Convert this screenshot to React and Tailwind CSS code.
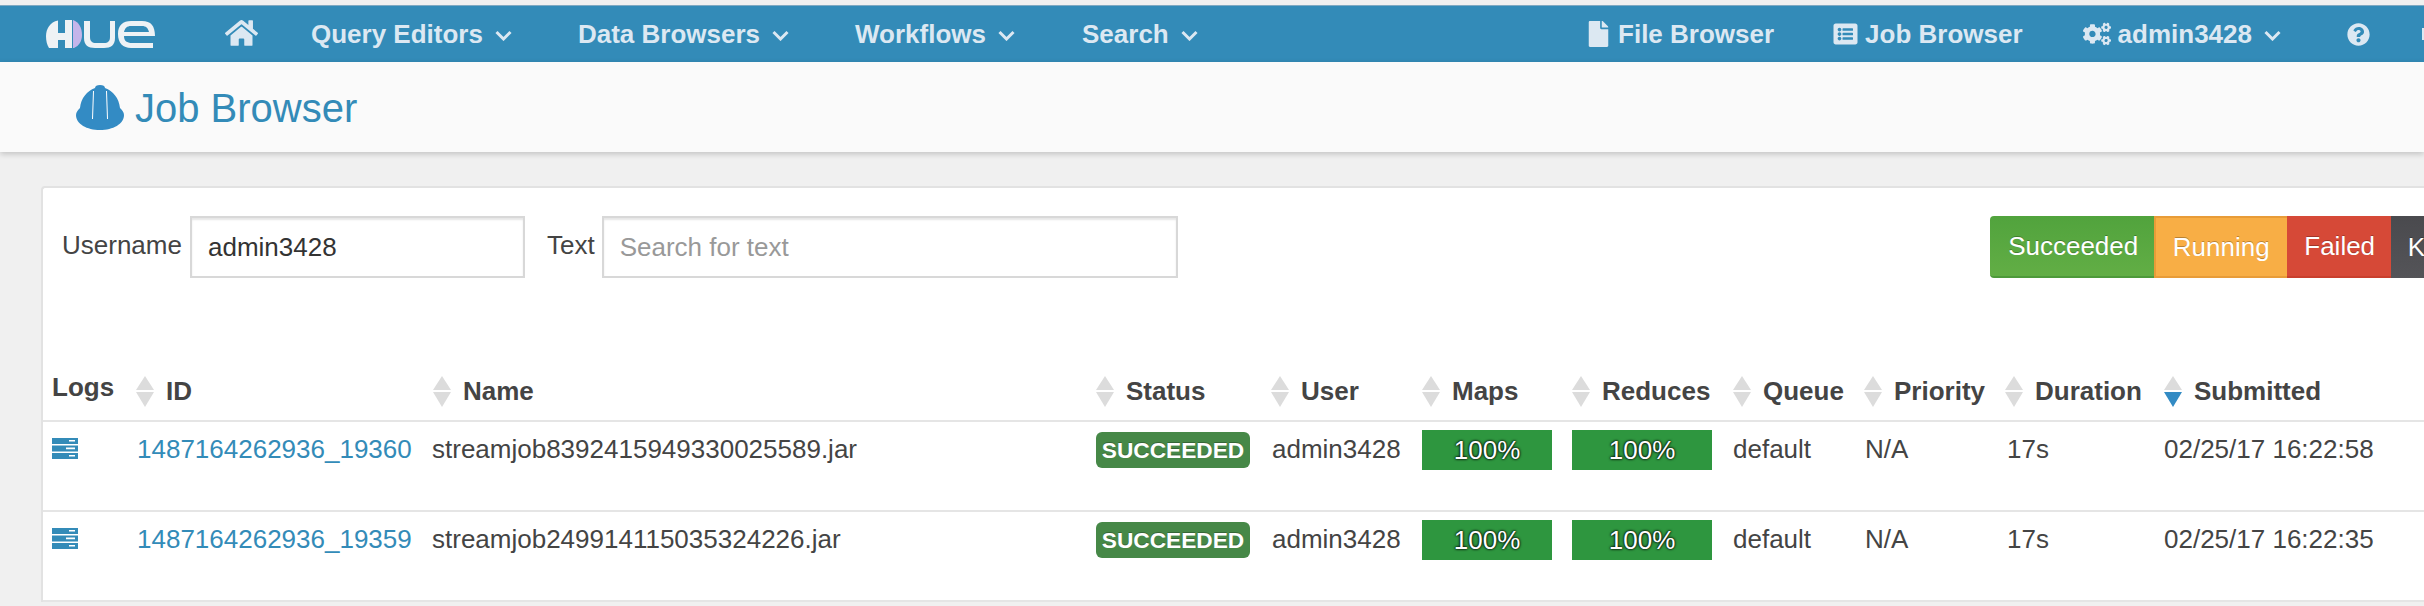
import React from 'react';
import { FaHome, FaFile, FaListAlt, FaCogs, FaQuestionCircle } from 'react-icons/fa';

const gridCols = 'grid grid-cols-[84px_297px_663px_175px_151px_150px_161px_131px_141px_159px_260px] pl-[9px]';

const jobs = [
  { id: '1487164262936_19360', name: 'streamjob8392415949330025589.jar', submitted: '02/25/17 16:22:58' },
  { id: '1487164262936_19359', name: 'streamjob249914115035324226.jar', submitted: '02/25/17 16:22:35' },
];

const Chevron = ({ className }) => (
  <svg viewBox="0 0 17 11" className={className} fill="none" stroke="currentColor" strokeWidth="3">
    <path d="M1.5 2 L8.5 9 L15.5 2" />
  </svg>
);

const HueLogo = () => (
  <svg viewBox="0 0 110 28" className="h-[28px] w-[110px]">
    <path fill="#eef2f5" d="M12 .5C4 2 0 9 0 16c0 5 1 9 3 12h9v-8h7v8h7V0h-7v13h-7z" />
    <path fill="#c5b5ea" d="M27 0c6 2 9 8 9 15 0 6-3 11-8 13h-1z" />
    <path fill="#eef2f5" d="M38 1h6v16c0 4 2 6 6 6h8c4 0 6-2 6-6V1h5v17c0 7-4 10-11 10h-9c-7 0-11-3-11-10z" />
    <path fill="#eef2f5" fillRule="evenodd" d="M72 14c0-9 5-13 13-13h11c9 0 13 5 13 15H78c0 5 3 7 8 7h21v5H85c-8 0-13-5-13-14zm6-2h25c-1-4-3-6-7-6H85c-4 0-6 2-7 6z" />
  </svg>
);

const Helmet = () => (
  <svg viewBox="0 0 48 45" className="h-[45px] w-[48px] shrink-0">
    <path fill="#338bc4" d="M19 3c0-2 2-3 5-3s5 1 5 3c8 3 14 10 15 20 2 2 4 4 4 7 0 9-11 15-24 15S0 39 0 30c0-3 2-5 4-7C5 13 11 6 19 3z" />
    <path fill="none" stroke="#fff" strokeWidth="1" d="M17.5 6 L16.5 34 M30.5 6 L31.5 34" />
  </svg>
);

const TasksIcon = () => (
  <svg viewBox="0 0 26 21" className="mt-[-4px] h-[21px] w-[26px]">
    <path fill="#338bb8" d="M0 0h26v6H0zM0 7.5h26v6H0zM0 15h26v6H0z" />
    <path fill="#fff" d="M17 2h6v1.6h-6zM14 9.6h9v1.6h-9zM17 17h6v1.6h-6z" />
  </svg>
);

const SortIcon = ({ active }) => (
  <svg viewBox="0 0 18 31" className="h-[31px] w-[18px] shrink-0">
    <path fill="#dcdcdc" d="M9 0 L18 14 H0 Z" />
    <path fill={active ? '#338bc4' : '#dcdcdc'} d="M0 16 H18 L9 31 Z" />
  </svg>
);

const NavMenu = ({ label, className }) => (
  <div className={`flex items-center ${className}`}>
    <span>{label}</span>
    <Chevron className="ml-[12px] mt-[2px] h-[11px] w-[17px]" />
  </div>
);

const SortHeader = ({ label, active }) => (
  <div className="flex items-center">
    <SortIcon active={active} />
    <span className="ml-[12px]">{label}</span>
  </div>
);

const FullBar = () => (
  <div className="flex h-[40px] w-full items-center justify-center bg-[#2e963f] text-white [text-shadow:0_0_3px_#000,0_0_2px_#000]">
    100%
  </div>
);

const App = () => {
  return (
    <div className="h-[606px] w-full overflow-hidden bg-[#f0f0f0] font-['Liberation_Sans',Arial,sans-serif] text-[26px] text-[#444]">
      <div className="h-[5px]" />

      {/* Top nav */}
      <div className="flex h-[57px] items-center border-t border-[#7fa9c2] bg-[#338bb8] pl-[46px] font-bold text-[#dce8f2]">
        <HueLogo />
        <FaHome className="ml-[69px] mt-[-3px] h-[30px] w-[33px] shrink-0" />
        <NavMenu label="Query Editors" className="ml-[53px]" />
        <NavMenu label="Data Browsers" className="ml-[66px]" />
        <NavMenu label="Workflows" className="ml-[66px]" />
        <NavMenu label="Search" className="ml-[67px]" />
        <div className="ml-auto flex items-center">
          <FaFile className="h-[26px] w-[23px]" />
          <span className="ml-[8px]">File Browser</span>
          <FaListAlt className="ml-[58px] h-[24px] w-[27px]" />
          <span className="ml-[6px]">Job Browser</span>
          <FaCogs className="ml-[60px] h-[26px] w-[28px]" />
          <span className="ml-[7px]">admin3428</span>
          <Chevron className="ml-[12px] mt-[2px] h-[11px] w-[17px]" />
          <FaQuestionCircle className="ml-[66px] h-[23px] w-[23px]" />
          <div className="ml-[52px] h-[12px] w-[2px] bg-[#dce8f2]" />
        </div>
      </div>

      {/* Page title */}
      <div className="flex h-[90px] items-center bg-[#fafafa] pl-[76px] text-[40px] text-[#338bb8] shadow-[0_2px_6px_rgba(0,0,0,0.2)]">
        <Helmet />
        <span className="ml-[11px] mt-[2px]">Job Browser</span>
      </div>

      {/* Card */}
      <div className="ml-[41px] mt-[34px] rounded-tl-[4px] border-l-2 border-t-2 border-[#e2e2e2] bg-white">
        <div className="flex pl-[19px] pt-[28px]">
          <label className="mt-[-2px] flex h-[62px] w-[119px] shrink-0 items-center">Username</label>
          <input
            readOnly
            value="admin3428"
            className="ml-[9px] h-[62px] w-[335px] shrink-0 border-2 border-[#d8d8d8] pl-[16px] text-[#333] shadow-[inset_0_2px_2px_rgba(0,0,0,0.1)]"
          />
          <label className="ml-[22px] mt-[-2px] flex h-[62px] shrink-0 items-center">Text</label>
          <input
            readOnly
            placeholder="Search for text"
            className="ml-[7px] h-[62px] w-[576px] shrink-0 border-2 border-[#d8d8d8] pl-[16px] text-[#333] shadow-[inset_0_2px_2px_rgba(0,0,0,0.1)] placeholder:text-[#999]"
          />
          <div className="ml-[812px] flex h-[62px] shrink-0 text-white [text-shadow:0_-1px_0_rgba(0,0,0,0.25)]">
            <div className="flex w-[164px] items-center justify-center rounded-l-[4px] border-b-2 border-[#4d9a3a] bg-gradient-to-b from-[#51a33d] to-[#62ae45] pl-[3px]">Succeeded</div>
            <div className="flex w-[133px] items-center justify-center border-2 border-r-0 border-[#e89c38] bg-[#f8ae45]">Running</div>
            <div className="flex w-[104px] items-center justify-center border-b-2 border-[#c93f2d] bg-[#d64937] pl-[2px]">Failed</div>
            <div className="flex w-[110px] items-center bg-gradient-to-b from-[#4a4a4e] to-[#545458] pl-[17px]">Killed</div>
          </div>
        </div>

        {/* Table head */}
        <div className={`${gridCols} mt-[85px] h-[59px] items-center border-b-2 border-[#e5e5e5] font-bold`}>
          <div className="mt-[-8px]">Logs</div>
          <SortHeader label="ID" />
          <SortHeader label="Name" />
          <SortHeader label="Status" />
          <SortHeader label="User" />
          <SortHeader label="Maps" />
          <SortHeader label="Reduces" />
          <SortHeader label="Queue" />
          <SortHeader label="Priority" />
          <SortHeader label="Duration" />
          <SortHeader label="Submitted" active />
        </div>

        {/* Rows */}
        {jobs.map((job) => (
          <div key={job.id} className={`${gridCols} h-[90px] border-b-2 border-[#e5e5e5] pt-[8px] leading-[38px]`}>
            <div className="flex h-[40px] items-center"><TasksIcon /></div>
            <div className="pl-[1px] text-[#338bb8]">{job.id}</div>
            <div className="ml-[-1px]">{job.name}</div>
            <div>
              <span className="mt-[2px] flex h-[36px] w-[154px] items-center justify-center rounded-[6px] bg-[#468847] text-[22.7px] font-bold text-white [text-shadow:0_-1px_0_rgba(0,0,0,0.25)]">
                SUCCEEDED
              </span>
            </div>
            <div className="pl-[1px]">admin3428</div>
            <div className="w-[130px]"><FullBar /></div>
            <div className="w-[140px]"><FullBar /></div>
            <div>default</div>
            <div className="pl-[1px]">N/A</div>
            <div className="pl-[2px]">17s</div>
            <div className="whitespace-nowrap">{job.submitted}</div>
          </div>
        ))}
      </div>
    </div>
  );
};

export default App;
